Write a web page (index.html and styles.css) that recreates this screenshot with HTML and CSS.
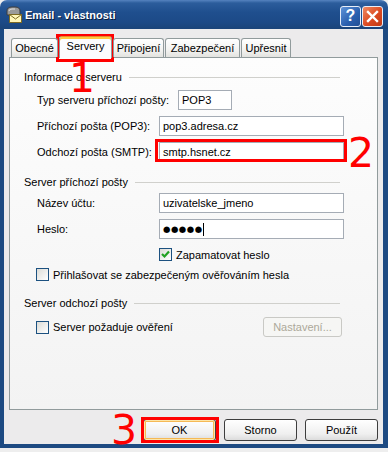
FILE: index.html
```html
<!DOCTYPE html>
<html lang="cs">
<head>
    <meta charset="UTF-8">
    <title>Email - vlastnosti</title>
    <link rel="stylesheet" href="styles.css">
</head>
<body>
    <div class="window">
        <div class="titlebar">
            <svg class="app-icon" width="16" height="18" viewBox="0 0 16 18">
                <path d="M1 9 L1 5 Q1 1 6 1 L9 1 Q14 1 14 5 L14 9 Z" fill="#9a9a9a" stroke="#3c3c3c" stroke-width="1"/>
                <path d="M3 5 Q3 3 6 3 L9 3" fill="none" stroke="#e0e0e0" stroke-width="1"/>
                <rect x="3.5" y="8.5" width="12" height="8" fill="#fff6b8" stroke="#7d6a24"/>
                <path d="M3.5 8.5 L9.5 13 L15.5 8.5" fill="none" stroke="#7d6a24"/>
            </svg>
            <span class="title">Email - vlastnosti</span>
            <div class="caption-buttons">
                <span class="cap-btn help">?</span>
                <span class="cap-btn close">
                    <svg width="21" height="21" viewBox="0 0 21 21">
                        <path d="M6 6 L15 15 M15 6 L6 15" stroke="#fff" stroke-width="2.4" stroke-linecap="square"/>
                    </svg>
                </span>
            </div>
        </div>
        <div class="frame">
            <div class="tabs">
                <div class="tab tab-general">Obecné</div>
                <div class="tab tab-servers active">Servery</div>
                <div class="tab tab-connect">Připojení</div>
                <div class="tab tab-security">Zabezpečení</div>
                <div class="tab tab-advanced">Upřesnit</div>
            </div>
            <div class="panel">
                <div class="group-title first">Informace o serveru</div>
                <div class="field wide-label">
                    <span class="label">Typ serveru příchozí pošty:</span>
                    <div class="input input-short">POP3</div>
                </div>
                <div class="field">
                    <span class="label">Příchozí pošta (POP3):</span>
                    <div class="input">pop3.adresa.cz</div>
                </div>
                <div class="field">
                    <span class="label">Odchozí pošta (SMTP):</span>
                    <div class="input">smtp.hsnet.cz</div>
                </div>

                <div class="group-title second">Server příchozí pošty</div>
                <div class="field field-account">
                    <span class="label">Název účtu:</span>
                    <div class="input">uzivatelske_jmeno</div>
                </div>
                <div class="field">
                    <span class="label">Heslo:</span>
                    <div class="input"><span class="dots">●●●●●</span><span class="caret"></span></div>
                </div>
                <div class="check-row check-remember">
                    <span class="checkbox checked">
                        <svg width="11" height="11" viewBox="0 0 11 11">
                            <path d="M2 5 L4.5 7.5 L9 2.5" fill="none" stroke="#21a121" stroke-width="2.2"/>
                        </svg>
                    </span>
                    <span>Zapamatovat heslo</span>
                </div>
                <div class="check-row check-spa">
                    <span class="checkbox"></span>
                    <span>Přihlašovat se zabezpečeným ověřováním hesla</span>
                </div>

                <div class="group-title third">Server odchozí pošty</div>
                <div class="check-row check-auth">
                    <span class="checkbox"></span>
                    <span>Server požaduje ověření</span>
                    <span class="btn disabled">Nastavení...</span>
                </div>
            </div>
            <div class="dialog-buttons">
                <span class="btn focused">OK</span>
                <span class="btn">Storno</span>
                <span class="btn">Použít</span>
            </div>
        </div>

        <!-- annotations drawn over the screenshot -->
        <div class="callout callout-tab"></div>
        <div class="callout callout-smtp"></div>
        <div class="callout callout-ok"></div>
        <span class="mark mark-1">1</span>
        <span class="mark mark-2">2</span>
        <span class="mark mark-3">3</span>
    </div>
</body>
</html>
```

FILE: styles.css
```css
body {
    margin: 0;
    background: linear-gradient(#eeeeee 0, #eeeeee 10px, #1d3a33 10px);
    font-family: "Liberation Sans", Arial, sans-serif;
    font-size: 11px;
    color: #000;
}
.window {
    position: relative;
    width: 388px;
}
.titlebar {
    height: 29px;
    display: flex;
    align-items: center;
    padding: 0 5px 0 6px;
    border-radius: 7px 7px 0 0;
    background: linear-gradient(#5583bf 0, #2c5d9c 3px, #1f4f8e 12px, #1c4a87 22px, #1a4479 29px);
}
.app-icon {
    margin-top: 1px;
}
.title {
    margin-left: 3px;
    color: #fff;
    font-weight: bold;
    font-size: 11px;
    text-shadow: 1px 1px 0 #0b1d3d;
}
.caption-buttons {
    margin-left: auto;
    display: flex;
    gap: 1px;
    margin-top: 3px;
}
.cap-btn {
    width: 21px;
    height: 21px;
    box-sizing: border-box;
    border: 1px solid #e8eef8;
    border-radius: 3px;
    display: flex;
    align-items: center;
    justify-content: center;
    color: #fff;
}
.cap-btn.help {
    background: linear-gradient(135deg, #5e93d8, #2a5fae 60%, #234f94);
    font-weight: bold;
    font-size: 16px;
}
.cap-btn.close {
    background: linear-gradient(135deg, #f08a62, #db4a22 55%, #c23a14);
}
.cap-btn.close svg {
    margin: -1px;
}
.frame {
    background-color: #ecebec;
    border: solid #1d4a82;
    border-width: 0 5px 4px 4px;
    padding: 7px 5px 3px 5px;
}
.tabs {
    display: flex;
    align-items: flex-end;
    height: 21px;
    margin-left: 2px;
    position: relative;
    z-index: 1;
}
.tab {
    height: 19px;
    box-sizing: border-box;
    margin-right: 1px;
    border: 1px solid #919b9c;
    border-bottom: none;
    border-radius: 3px 3px 0 0;
    background: linear-gradient(#ffffff, #f3f3f1 60%, #e3e3df);
    text-align: center;
    line-height: 18px;
}
.tab.active {
    height: 22px;
    margin-bottom: -1px;
    line-height: 19px;
    background: #fcfcfe;
    border-top-color: #e68b2c;
    box-shadow: inset 0 2px 0 #ffc83c;
}
.tab-general { width: 47px; }
.tab-servers { width: 53px; }
.tab-connect { width: 51px; }
.tab-security { width: 75px; }
.tab-advanced { width: 50px; }
.panel {
    height: 353px;
    box-sizing: border-box;
    border: 1px solid #919b9c;
    background: linear-gradient(#fdfdfd, #f3f3f3);
    padding: 0 33px 0 14px;
    overflow: hidden;
}
.group-title {
    display: flex;
    align-items: center;
    height: 14px;
    margin-right: 4px;
}
.group-title::after {
    content: "";
    flex: 1;
    height: 1px;
    margin-left: 7px;
    background-color: #d0d0cc;
}
.group-title.first { margin-top: 12px; }
.group-title.second { margin-top: 13px; }
.group-title.third { margin-top: 15px; }
.field {
    display: flex;
    align-items: center;
    height: 20px;
    margin-top: 6px;
    padding-left: 13px;
}
.field-account {
    margin-top: 4px;
}
.field .label {
    width: 122px;
    flex-shrink: 0;
}
.field.wide-label .label {
    width: 141px;
}
.input {
    flex: 1;
    height: 20px;
    box-sizing: border-box;
    border: 1px solid #a5acb5;
    background-color: #fff;
    padding: 0 3px;
    line-height: 18px;
    display: flex;
    align-items: center;
}
.input.input-short {
    flex: none;
    width: 54px;
}
.dots {
    font-family: "DejaVu Sans", sans-serif;
    font-size: 8.5px;
    letter-spacing: 0.5px;
}
.caret {
    width: 1px;
    height: 13px;
    background-color: #000;
}
.check-row {
    display: flex;
    align-items: center;
    height: 13px;
    gap: 4px;
}
.check-remember {
    margin-top: 9px;
    padding-left: 135px;
}
.check-spa {
    margin-top: 7px;
    padding-left: 12px;
}
.check-auth {
    height: 20px;
    margin-top: 7px;
    padding-left: 12px;
}
.checkbox {
    width: 13px;
    height: 13px;
    box-sizing: border-box;
    border: 1px solid #1c5180;
    background: linear-gradient(135deg, #dcdcd7, #ffffff);
    display: flex;
    align-items: center;
    justify-content: center;
}
.btn {
    width: 73px;
    height: 22px;
    box-sizing: border-box;
    border: 1px solid #3d3d3d;
    border-radius: 3px;
    background: linear-gradient(#ffffff, #efefef 70%, #dcdcdc);
    display: flex;
    align-items: center;
    justify-content: center;
}
.btn.focused {
    box-shadow: inset 0 0 0 1px #fde6a8, inset 0 0 0 2px #f5b955;
}
.btn.disabled {
    margin-left: auto;
    margin-right: 2px;
    width: 79px;
    height: 20px;
    border-color: #c9c9c5;
    background: #f6f6f4;
    color: #aca899;
}
.dialog-buttons {
    display: flex;
    justify-content: flex-end;
    gap: 8px;
    margin-top: 9px;
}
.callout {
    position: absolute;
    border: 3px solid #ff0000;
    box-sizing: border-box;
}
.callout-tab { left: 56px; top: 34px; width: 58px; height: 28px; }
.callout-smtp { left: 155px; top: 139px; width: 192px; height: 23px; }
.callout-ok { left: 141px; top: 417px; width: 78px; height: 26px; }
.mark {
    position: absolute;
    font-family: "DejaVu Sans", sans-serif;
    font-size: 41px;
    line-height: 30px;
    color: #ff0000;
}
.mark-1 { left: 69px; top: 63px; }
.mark-2 { left: 348px; top: 138px; }
.mark-3 { left: 111px; top: 415px; }
```
